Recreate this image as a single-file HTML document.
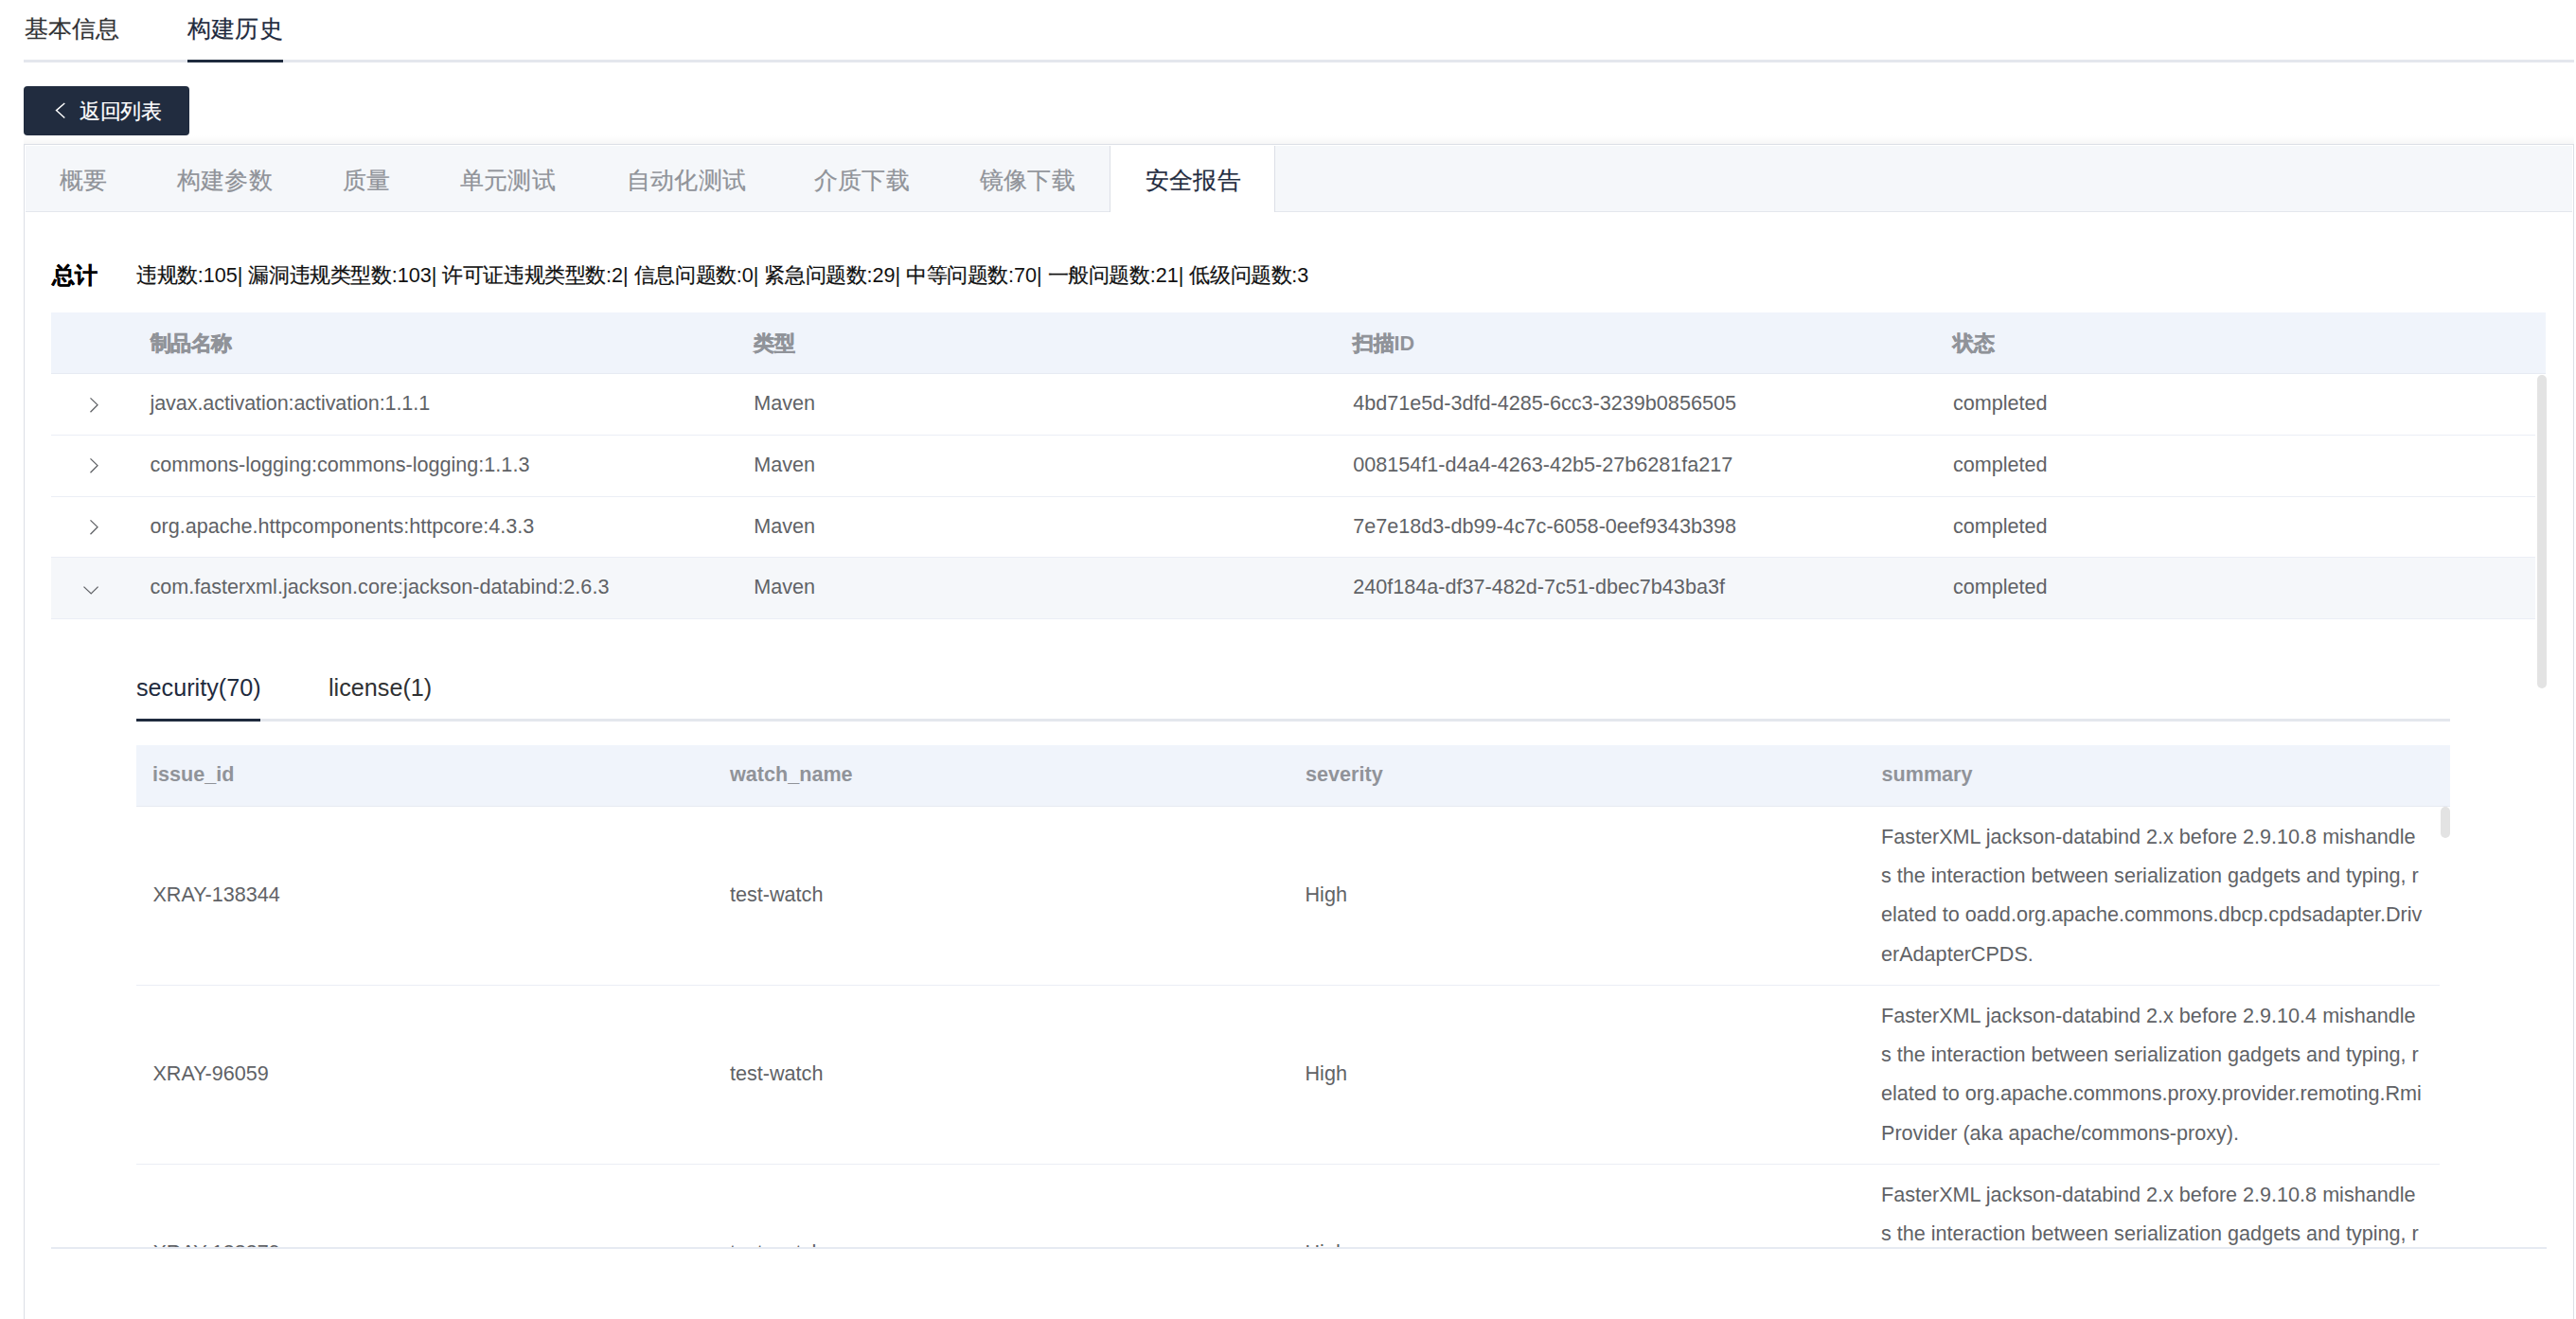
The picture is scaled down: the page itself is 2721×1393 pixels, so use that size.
<!DOCTYPE html>
<html><head><meta charset="utf-8">
<style>
html,body{margin:0;padding:0;}
body{width:2721px;height:1393px;overflow:hidden;position:relative;background:#fff;font-family:"Liberation Sans",sans-serif;}
.a{position:absolute;}
.t{position:absolute;white-space:nowrap;line-height:1;}
</style></head><body>
<div class="t" style="left:25.5px;top:18.07px;font-size:25.2px;color:#303133;"><span style="letter-spacing:0.20px;-webkit-text-stroke:0.2px currentColor;">基本信息</span></div>
<div class="t" style="left:198px;top:18.07px;font-size:25.2px;color:#1f2b3e;"><span style="letter-spacing:0.20px;-webkit-text-stroke:0.2px currentColor;">构建历史</span></div>
<div class="a" style="left:25px;top:63px;width:2694px;height:3px;background:#e4e7ed"></div>
<div class="a" style="left:198px;top:63px;width:101px;height:3px;background:#1f2b3e"></div>
<div class="a" style="left:25px;top:91px;width:175px;height:52px;border-radius:4px;background:#212c3f"></div>
<svg class="a" style="left:55px;top:104px" width="18" height="26" viewBox="0 0 18 26"><path d="M13.3 5 L4.5 12.6 L13.3 20.5" fill="none" stroke="#fff" stroke-width="1.4"/></svg>
<div class="t" style="left:84px;top:106.72px;font-size:21.6px;color:#fff;"><span style="letter-spacing:-0.40px;-webkit-text-stroke:0.2px currentColor;">返回列表</span></div>
<div class="a" style="left:25px;top:143px;width:2694px;height:9px;background:linear-gradient(to bottom,rgba(0,0,0,0),rgba(0,0,0,.035))"></div>
<div class="a" style="left:25px;top:152px;width:2692px;height:1300px;border:1px solid #dcdfe6;background:#fff"></div>
<div class="a" style="left:27px;top:154px;width:2690px;height:69px;background:#f5f7fa;border-bottom:1px solid #e4e7ed"></div>
<div class="a" style="left:1172px;top:154px;width:173px;height:70px;background:#fff;border-left:1px solid #dcdfe6;border-right:1px solid #dcdfe6"></div>
<div class="t" style="left:63px;top:178.17px;font-size:25.2px;color:#909399;"><span style="letter-spacing:0.20px;-webkit-text-stroke:0.2px currentColor;">概要</span></div>
<div class="t" style="left:187px;top:178.17px;font-size:25.2px;color:#909399;"><span style="letter-spacing:0.20px;-webkit-text-stroke:0.2px currentColor;">构建参数</span></div>
<div class="t" style="left:362px;top:178.17px;font-size:25.2px;color:#909399;"><span style="letter-spacing:0.20px;-webkit-text-stroke:0.2px currentColor;">质量</span></div>
<div class="t" style="left:486px;top:178.17px;font-size:25.2px;color:#909399;"><span style="letter-spacing:0.20px;-webkit-text-stroke:0.2px currentColor;">单元测试</span></div>
<div class="t" style="left:662px;top:178.17px;font-size:25.2px;color:#909399;"><span style="letter-spacing:0.20px;-webkit-text-stroke:0.2px currentColor;">自动化测试</span></div>
<div class="t" style="left:860px;top:178.17px;font-size:25.2px;color:#909399;"><span style="letter-spacing:0.20px;-webkit-text-stroke:0.2px currentColor;">介质下载</span></div>
<div class="t" style="left:1035px;top:178.17px;font-size:25.2px;color:#909399;"><span style="letter-spacing:0.20px;-webkit-text-stroke:0.2px currentColor;">镜像下载</span></div>
<div class="t" style="left:1210px;top:178.17px;font-size:25.2px;color:#1f2b3e;"><span style="letter-spacing:0.20px;-webkit-text-stroke:0.2px currentColor;">安全报告</span></div>
<div class="t" style="left:55px;top:279.01px;font-size:24.2px;color:#000;font-weight:bold"><span style="letter-spacing:0.2px;-webkit-text-stroke:0.25px currentColor">总计</span></div>
<div class="t" style="left:144px;top:279.52px;font-size:21.6px;color:#111;"><span style="letter-spacing:-0.40px;-webkit-text-stroke:0.2px currentColor;">违规数</span>:105| <span style="letter-spacing:-0.40px;-webkit-text-stroke:0.2px currentColor;">漏洞违规类型数</span>:103| <span style="letter-spacing:-0.40px;-webkit-text-stroke:0.2px currentColor;">许可证违规类型数</span>:2| <span style="letter-spacing:-0.40px;-webkit-text-stroke:0.2px currentColor;">信息问题数</span>:0| <span style="letter-spacing:-0.40px;-webkit-text-stroke:0.2px currentColor;">紧急问题数</span>:29| <span style="letter-spacing:-0.40px;-webkit-text-stroke:0.2px currentColor;">中等问题数</span>:70| <span style="letter-spacing:-0.40px;-webkit-text-stroke:0.2px currentColor;">一般问题数</span>:21| <span style="letter-spacing:-0.40px;-webkit-text-stroke:0.2px currentColor;">低级问题数</span>:3</div>
<div class="a" style="left:54px;top:330px;width:2635px;height:64px;background:#f0f4fb;border-bottom:1px solid #e6eaf2"></div>
<div class="t" style="left:158.5px;top:352.42px;font-size:21.6px;color:#909399;font-weight:bold"><span style="letter-spacing:-0.40px;-webkit-text-stroke:0.65px currentColor;">制品名称</span></div>
<div class="t" style="left:796.3px;top:352.42px;font-size:21.6px;color:#909399;font-weight:bold"><span style="letter-spacing:-0.40px;-webkit-text-stroke:0.65px currentColor;">类型</span></div>
<div class="t" style="left:1429.3px;top:352.42px;font-size:21.6px;color:#909399;font-weight:bold"><span style="letter-spacing:-0.40px;-webkit-text-stroke:0.65px currentColor;">扫描</span>ID</div>
<div class="t" style="left:2063px;top:352.42px;font-size:21.6px;color:#909399;font-weight:bold"><span style="letter-spacing:-0.40px;-webkit-text-stroke:0.65px currentColor;">状态</span></div>
<div class="a" style="left:54px;top:395.50px;width:2624px;height:64.65px;border-bottom:1px solid #ebeef5;box-sizing:border-box;"></div>
<div class="t" style="left:158.5px;top:415.42px;font-size:21.6px;color:#606266;letter-spacing:-0.1px">javax.activation:activation:1.1.1</div>
<div class="t" style="left:796.3px;top:415.42px;font-size:21.6px;color:#606266;">Maven</div>
<div class="t" style="left:1429.3px;top:415.42px;font-size:21.6px;color:#606266;">4bd71e5d-3dfd-4285-6cc3-3239b0856505</div>
<div class="t" style="left:2063px;top:415.42px;font-size:21.6px;color:#606266;">completed</div>
<svg class="a" style="left:80px;top:407.82px" width="40" height="40" viewBox="0 0 40 40"><path d="M15.5 12.35 L23 19.65 L15.5 27.25" fill="none" stroke="#606266" stroke-width="1.3"/></svg>
<div class="a" style="left:54px;top:460.15px;width:2624px;height:64.65px;border-bottom:1px solid #ebeef5;box-sizing:border-box;"></div>
<div class="t" style="left:158.5px;top:480.07px;font-size:21.6px;color:#606266;">commons-logging:commons-logging:1.1.3</div>
<div class="t" style="left:796.3px;top:480.07px;font-size:21.6px;color:#606266;">Maven</div>
<div class="t" style="left:1429.3px;top:480.07px;font-size:21.6px;color:#606266;">008154f1-d4a4-4263-42b5-27b6281fa217</div>
<div class="t" style="left:2063px;top:480.07px;font-size:21.6px;color:#606266;">completed</div>
<svg class="a" style="left:80px;top:472.47px" width="40" height="40" viewBox="0 0 40 40"><path d="M15.5 12.35 L23 19.65 L15.5 27.25" fill="none" stroke="#606266" stroke-width="1.3"/></svg>
<div class="a" style="left:54px;top:524.80px;width:2624px;height:64.65px;border-bottom:1px solid #ebeef5;box-sizing:border-box;"></div>
<div class="t" style="left:158.5px;top:544.72px;font-size:21.6px;color:#606266;">org.apache.httpcomponents:httpcore:4.3.3</div>
<div class="t" style="left:796.3px;top:544.72px;font-size:21.6px;color:#606266;">Maven</div>
<div class="t" style="left:1429.3px;top:544.72px;font-size:21.6px;color:#606266;">7e7e18d3-db99-4c7c-6058-0eef9343b398</div>
<div class="t" style="left:2063px;top:544.72px;font-size:21.6px;color:#606266;">completed</div>
<svg class="a" style="left:80px;top:537.12px" width="40" height="40" viewBox="0 0 40 40"><path d="M15.5 12.35 L23 19.65 L15.5 27.25" fill="none" stroke="#606266" stroke-width="1.3"/></svg>
<div class="a" style="left:54px;top:589.45px;width:2624px;height:64.65px;border-bottom:1px solid #ebeef5;box-sizing:border-box;background:#f5f7fa;"></div>
<div class="t" style="left:158.5px;top:609.37px;font-size:21.6px;color:#606266;">com.fasterxml.jackson.core:jackson-databind:2.6.3</div>
<div class="t" style="left:796.3px;top:609.37px;font-size:21.6px;color:#606266;">Maven</div>
<div class="t" style="left:1429.3px;top:609.37px;font-size:21.6px;color:#606266;">240f184a-df37-482d-7c51-dbec7b43ba3f</div>
<div class="t" style="left:2063px;top:609.37px;font-size:21.6px;color:#606266;">completed</div>
<svg class="a" style="left:80px;top:601.78px" width="40" height="40" viewBox="0 0 40 40"><path d="M8.5 17.65 L16.2 24.95 L23.6 17.65" fill="none" stroke="#606266" stroke-width="1.3"/></svg>
<div class="a" style="left:2680px;top:395.5px;width:10px;height:331px;border-radius:5px;background:#e3e3e3"></div>
<div class="t" style="left:144px;top:713.67px;font-size:25.2px;color:#1f2b3e;">security(70)</div>
<div class="t" style="left:347px;top:713.67px;font-size:25.2px;color:#303133;">license(1)</div>
<div class="a" style="left:144px;top:759px;width:2444px;height:3px;background:#e4e7ed"></div>
<div class="a" style="left:144px;top:759px;width:131px;height:3px;background:#1f2b3e"></div>
<div class="a" style="left:0px;top:653px;width:2678px;height:664px;overflow:hidden">
<div class="a" style="left:144px;top:134px;width:2444px;height:64.5px;background:#f0f4fb;border-bottom:1px solid #e6eaf2;box-sizing:border-box"></div>
<div class="t" style="left:161px;top:154.22px;font-size:21.6px;color:#909399;font-weight:bold">issue_id</div>
<div class="t" style="left:771px;top:154.22px;font-size:21.6px;color:#909399;font-weight:bold">watch_name</div>
<div class="t" style="left:1379px;top:154.22px;font-size:21.6px;color:#909399;font-weight:bold">severity</div>
<div class="t" style="left:1987.5px;top:154.22px;font-size:21.6px;color:#909399;font-weight:bold">summary</div>
<div class="a" style="left:144px;top:199.20px;width:2433px;height:188.9px;border-bottom:1px solid #ebeef5;box-sizing:border-box"></div>
<div class="t" style="left:161.4px;top:281.32px;font-size:21.6px;color:#606266;">XRAY-138344</div>
<div class="t" style="left:771px;top:281.32px;font-size:21.6px;color:#606266;">test-watch</div>
<div class="t" style="left:1378.5px;top:281.32px;font-size:21.6px;color:#606266;">High</div>
<div class="a" style="left:1987px;top:209.99px;font-size:21.6px;color:#606266;line-height:41.25px;white-space:nowrap">FasterXML jackson-databind 2.x before 2.9.10.8 mishandle<br>s the interaction between serialization gadgets and typing, r<br>elated to oadd.org.apache.commons.dbcp.cpdsadapter.Driv<br>erAdapterCPDS.</div>
<div class="a" style="left:144px;top:388.10px;width:2433px;height:188.9px;border-bottom:1px solid #ebeef5;box-sizing:border-box"></div>
<div class="t" style="left:161.4px;top:470.22px;font-size:21.6px;color:#606266;">XRAY-96059</div>
<div class="t" style="left:771px;top:470.22px;font-size:21.6px;color:#606266;">test-watch</div>
<div class="t" style="left:1378.5px;top:470.22px;font-size:21.6px;color:#606266;">High</div>
<div class="a" style="left:1987px;top:398.89px;font-size:21.6px;color:#606266;line-height:41.25px;white-space:nowrap">FasterXML jackson-databind 2.x before 2.9.10.4 mishandle<br>s the interaction between serialization gadgets and typing, r<br>elated to org.apache.commons.proxy.provider.remoting.Rmi<br>Provider (aka apache/commons-proxy).</div>
<div class="a" style="left:144px;top:577.00px;width:2433px;height:188.9px;border-bottom:1px solid #ebeef5;box-sizing:border-box"></div>
<div class="t" style="left:161.4px;top:659.12px;font-size:21.6px;color:#606266;">XRAY-138379</div>
<div class="t" style="left:771px;top:659.12px;font-size:21.6px;color:#606266;">test-watch</div>
<div class="t" style="left:1378.5px;top:659.12px;font-size:21.6px;color:#606266;">High</div>
<div class="a" style="left:1987px;top:587.79px;font-size:21.6px;color:#606266;line-height:41.25px;white-space:nowrap">FasterXML jackson-databind 2.x before 2.9.10.8 mishandle<br>s the interaction between serialization gadgets and typing, r<br>elated to oadd.org.apache.commons.dbcp.cpdsadapter.Driv<br>erAdapterCPDS.</div>
<div class="a" style="left:2578px;top:199.20000000000005px;width:10px;height:33px;border-radius:5px;background:#e3e3e3"></div>
</div>
<div class="a" style="left:54px;top:1317px;width:2636px;height:1.5px;background:#e6eaf2"></div>
</body></html>
